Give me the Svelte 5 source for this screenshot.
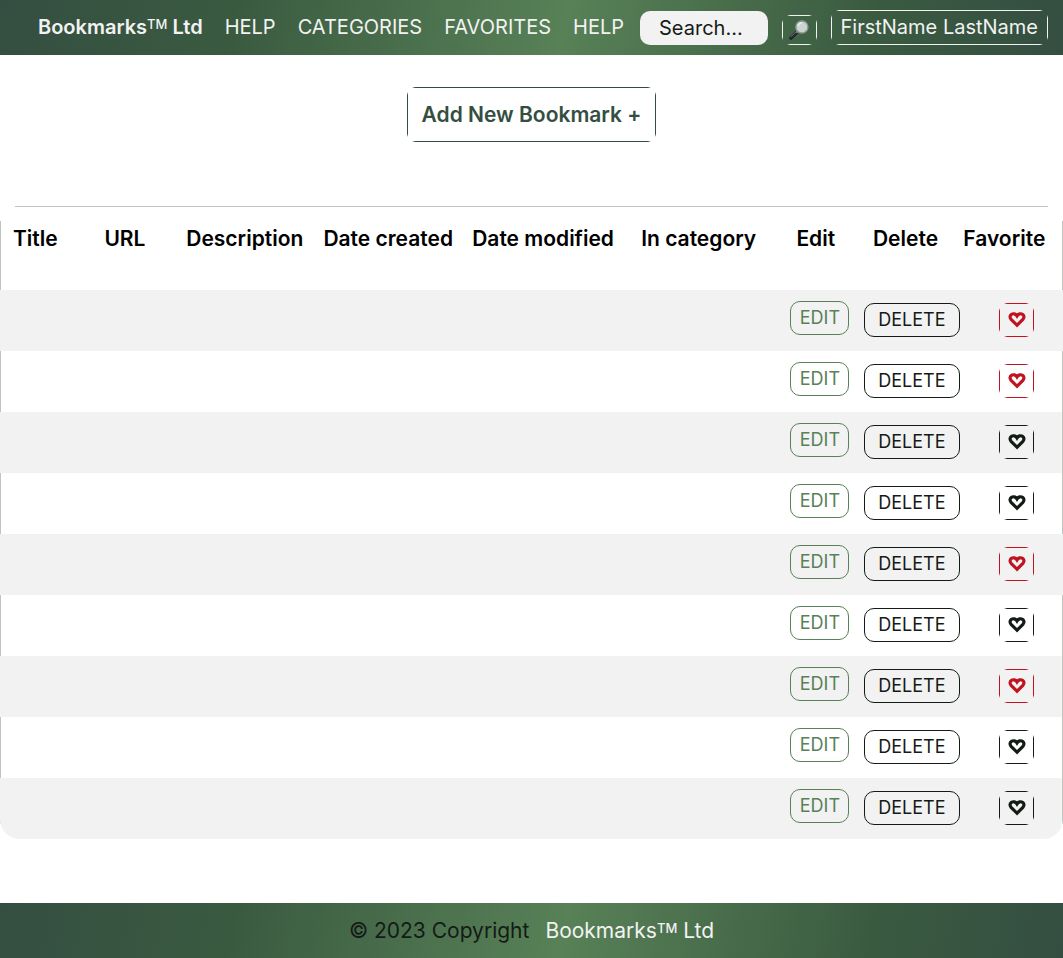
<script>
  const links = ['HELP', 'CATEGORIES', 'FAVORITES', 'HELP'];
  const columns = [
    { name: 'Title', width: 8.6 },
    { name: 'URL', width: 7.7 },
    { name: 'Description', width: 12.9 },
    { name: 'Date created', width: 14 },
    { name: 'Date modified', width: 15.9 },
    { name: 'In category', width: 14.6 },
    { name: 'Edit', width: 7.2 },
    { name: 'Delete', width: 8.5 },
    { name: 'Favorite', width: 10.6 }
  ];
  let rows = $state([
    { favorite: true, full: true },
    { favorite: true },
    { favorite: false },
    { favorite: false },
    { favorite: true, full: true },
    { favorite: false },
    { favorite: true },
    { favorite: false },
    { favorite: false }
  ]);
</script>

<div class="page">
  <header class="bar">
    <a class="brand" href="#home">Bookmarks<span class="tm">TM</span> Ltd</a>
    <nav>
      {#each links as link}
        <a href="#{link.toLowerCase()}">{link}</a>
      {/each}
    </nav>
    <form class="search" onsubmit={(e) => e.preventDefault()}>
      <input type="text" placeholder="Search..." aria-label="Search" />
      <button class="ticks find" type="submit" aria-label="Search bookmarks">
        <svg viewBox="0 0 20 20" width="20" height="20" aria-hidden="true">
          <path d="M2 18 L8 12" stroke="#23252b" stroke-width="3.6" stroke-linecap="round" />
          <path d="M2.2 16.6 L7 11.8" stroke="#777b86" stroke-width="1" stroke-linecap="round" />
          <path d="M7.4 12.6 L9 11" stroke="#8d9295" stroke-width="2" />
          <circle cx="12.9" cy="7" r="6" fill="#cbd5cf" stroke="#8f9a98" stroke-width="1.4" />
          <path d="M9 6 A4.3 4.3 0 0 1 13 2.7" fill="none" stroke="#e6ece8" stroke-width="1.4" />
        </svg>
      </button>
    </form>
    <button class="ticks user" type="button">FirstName LastName</button>
  </header>

  <main>
    <button class="ticks add" type="button">Add New Bookmark +</button>

    <table>
      <colgroup>
        {#each columns as column}
          <col style="width: {column.width}%" />
        {/each}
      </colgroup>
      <thead>
        <tr>
          {#each columns as column}
            <th scope="col">{column.name}</th>
          {/each}
        </tr>
      </thead>
      <tbody>
        {#each rows as row}
          <tr class:full={row.full}>
            <td></td><td></td><td></td><td></td><td></td><td></td>
            <td class="edit-cell"><button class="edit" type="button">EDIT</button></td>
            <td class="delete-cell"><button class="delete" type="button">DELETE</button></td>
            <td class="favorite-cell">
              <button
                class="ticks heart"
                class:on={row.favorite}
                type="button"
                aria-label="Favorite"
                aria-pressed={row.favorite}
                onclick={() => (row.favorite = !row.favorite)}
              >
                <svg viewBox="0 0 18 16" width="18" height="16" aria-hidden="true">
                  <path
                    d="M9 13.2 L3.1 7.3 C1.5 5.6 1.8 3.3 3.4 2.3 C5.2 1.2 7.6 1.7 9 4 C10.4 1.7 12.8 1.2 14.6 2.3 C16.2 3.3 16.5 5.6 14.9 7.3 Z"
                    fill="none"
                    stroke="currentColor"
                    stroke-width="3.2"
                  />
                </svg>
              </button>
            </td>
          </tr>
        {/each}
      </tbody>
    </table>
  </main>

  <footer class="bar">
    <span class="copyright">© 2023 Copyright</span>
    <a href="#home">Bookmarks<span class="tm">TM</span> Ltd</a>
  </footer>
</div>

<style>
  :global(body) {
    background: #fff;
  }
  .page {
    min-height: 100vh;
    display: flex;
    flex-direction: column;
    font-family: Inter, sans-serif;
    font-size: 20px;
    line-height: 24px;
    color: #000;
  }
  .bar {
    display: flex;
    align-items: center;
    box-sizing: border-box;
    min-height: 55px;
    color: #f2f2f2;
    background: linear-gradient(102deg, #344e41 0%, #3a5a40 22%, #588157 53%, #3a5a40 82%, #344e41 100%);
  }
  header {
    padding: 0 15px 0 38px;
  }
  header > a,
  nav {
    padding-bottom: 2px;
  }
  a {
    color: inherit;
    text-decoration: none;
    white-space: nowrap;
  }
  .brand {
    font-weight: 600;
  }
  .tm {
    font-size: 13px;
    font-weight: 500;
    line-height: 0;
    vertical-align: 5px;
  }
  nav {
    display: flex;
    gap: 22px;
    margin: 0 16px 0 22px;
  }
  .search {
    flex: 1;
    min-width: 0;
    display: flex;
    align-items: flex-end;
    gap: 14px;
    margin-right: 14px;
  }
  button,
  input {
    box-sizing: border-box;
    margin: 0;
    padding: 0;
    border: 0;
    font: inherit;
    color: inherit;
    background: none;
  }
  button {
    flex: none;
    cursor: pointer;
  }
  input {
    flex: 1;
    width: 0;
    min-width: 0;
    height: 34px;
    padding: 0 19px;
    border-radius: 10px;
    color: #141b16;
    background: #f2f2f2;
  }
  input::placeholder {
    color: #141b16;
    opacity: 1;
  }
  /* Outline made of four strokes that fade out before the corners */
  .ticks {
    --gap: 10px;
    --across: linear-gradient(90deg, transparent, currentColor 3px, currentColor calc(100% - 3px), transparent);
    --down: linear-gradient(transparent, currentColor 3px, currentColor calc(100% - 3px), transparent);
    background:
      var(--across) top / calc(100% - var(--gap)) 1px no-repeat,
      var(--across) bottom / calc(100% - var(--gap)) 1px no-repeat,
      var(--down) left / 1px calc(100% - var(--gap)) no-repeat,
      var(--down) right / 1px calc(100% - var(--gap)) no-repeat;
  }
  .find {
    display: grid;
    place-items: center;
    width: 35px;
    height: 30px;
  }
  .user {
    height: 35px;
    padding: 0 10px 2px;
    white-space: nowrap;
  }
  main {
    display: flex;
    flex-direction: column;
    align-items: center;
    padding: 32px 0 64px;
  }
  .add {
    height: 55px;
    padding: 0 15px;
    font-size: 21px;
    font-weight: 600;
    color: #344e41;
  }
  table {
    width: 100%;
    margin-top: 64px;
    table-layout: fixed;
    border-collapse: separate;
    border-spacing: 0;
    border-radius: 0 0 20px 20px;
    overflow: hidden;
    background:
      linear-gradient(#c0c4c1, #c0c4c1) top / calc(100% - 30px) 1px no-repeat,
      linear-gradient(#c0c4c1, #c0c4c1) left / 1px calc(100% - 30px) no-repeat,
      linear-gradient(#c0c4c1, #c0c4c1) right / 1px calc(100% - 30px) no-repeat;
  }
  th {
    height: 84px;
    box-sizing: border-box;
    padding: 21px 0 0 13px;
    text-align: left;
    vertical-align: top;
    font-size: 21px;
    font-weight: 600;
    white-space: nowrap;
  }
  td {
    height: 61px;
    box-sizing: border-box;
    padding: 0;
    vertical-align: top;
  }
  tbody tr:nth-child(odd) {
    background: linear-gradient(#f2f2f2, #f2f2f2) left / calc(100% - 1px) 100% no-repeat;
  }
  tbody tr.full:nth-child(odd) {
    background: #f2f2f2;
  }
  td button {
    display: block;
    height: 34px;
    border-radius: 10px;
    font-size: 18px;
    line-height: 22px;
  }
  .edit-cell {
    padding: 11px 0 0 7px;
  }
  .delete-cell {
    padding: 13px 0 0 4px;
  }
  .favorite-cell {
    padding: 13px 0 0 49px;
  }
  .edit {
    width: 59px;
    border: 1px solid #588157;
    color: #588157;
  }
  .delete {
    width: 96px;
    border: 1px solid #141b16;
    color: #141b16;
  }
  .heart {
    width: 35px;
    border-radius: 0;
    color: #141b16;
  }
  .heart svg {
    display: block;
    margin: 0 auto;
  }
  .heart.on {
    color: #c1121f;
  }
  footer {
    justify-content: center;
    gap: 16px;
    margin-top: auto;
    font-size: 21px;
  }
  .copyright {
    color: #141b16;
  }
</style>
